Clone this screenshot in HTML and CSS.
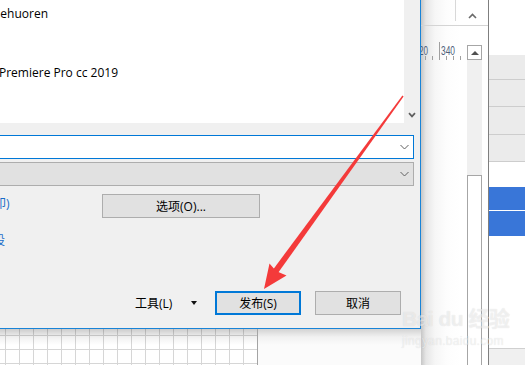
FILE: index.html
```html
<!DOCTYPE html>
<html>
<head>
<meta charset="utf-8">
<link rel="stylesheet" href="styles.css">
</head>
<body>
<div class="screen">
  <div class="left">
    <div class="dialog">
      <div class="listrow">
        <div class="list">
          <div class="item item1">nehuoren</div>
          <div class="item item2">Premiere Pro cc 2019</div>
        </div>
        <div class="vscroll">
          <svg width="8" height="6" viewBox="0 0 8 6"><path d="M1 1.2 L4 4.4 L7 1.2" fill="none" stroke="#5f5f5f" stroke-width="1.7"/></svg>
        </div>
      </div>
      <div class="combo active">
        <svg width="9" height="6" viewBox="0 0 9 6"><path d="M0.5 1 L4.5 5 L8.5 1" fill="none" stroke="#606060" stroke-width="1"/></svg>
      </div>
      <div class="combo">
        <svg width="9" height="6" viewBox="0 0 9 6"><path d="M0.5 1 L4.5 5 L8.5 1" fill="none" stroke="#606060" stroke-width="1"/></svg>
      </div>
      <div class="optrow">
        <span class="link link1">印)</span>
        <button class="btn opt">选项(O)...</button>
      </div>
      <div class="linkrow"><span class="link link2">设</span></div>
      <div class="footer">
        <span class="tools">工具(L)</span>
        <span class="caret"></span>
        <button class="btn primary">发布(S)</button>
        <button class="btn cancel">取消</button>
      </div>
    </div>
    <div class="below">
      <div class="grid"></div>
      <div class="pane"></div>
    </div>
  </div>
  <div class="right">
    <div class="colA">
      <div class="topbar">
        <div class="tb-cell"></div>
        <div class="tb-btn">
          <svg width="9" height="6" viewBox="0 0 9 6"><path d="M1 5 L4.5 1.5 L8 5" fill="none" stroke="#6a6a6a" stroke-width="1.6"/></svg>
        </div>
      </div>
      <div class="abody">
        <div class="ruler">
          <svg width="46" height="34" viewBox="0 0 46 34">
            <text x="-2" y="29" class="rtxt" textLength="9" lengthAdjust="spacingAndGlyphs">20</text>
            <text x="20" y="29" class="rtxt" textLength="14" lengthAdjust="spacingAndGlyphs">340</text>
            <g stroke="#a0a0a0" stroke-width="1">
              <line x1="4.5" y1="30" x2="4.5" y2="34"/>
              <line x1="11.5" y1="30" x2="11.5" y2="34"/>
              <line x1="18.5" y1="16" x2="18.5" y2="34"/>
              <line x1="25.5" y1="30" x2="25.5" y2="34"/>
              <line x1="32.5" y1="30" x2="32.5" y2="34"/>
              <line x1="39.5" y1="30" x2="39.5" y2="34"/>
            </g>
          </svg>
        </div>
        <div class="vsb">
          <div class="vsb-up"><span class="uptri"></span></div>
          <div class="vsb-track"></div>
          <div class="vsb-thumb"></div>
        </div>
      </div>
    </div>
    <div class="colB">
      <div class="r white top"></div>
      <div class="r gray h25"></div>
      <div class="r gray h27"></div>
      <div class="r gray h28"></div>
      <div class="r gray h27"></div>
      <div class="r white h25n"></div>
      <div class="r blue h23"></div>
      <div class="r sep"></div>
      <div class="r blue h25b"></div>
      <div class="r white fill"></div>
      <div class="r foot"></div>
    </div>
  </div>
  <svg class="arrow" width="525" height="365" viewBox="0 0 525 365">
    <polygon points="402.4,95.6 403.6,96.4 277.6,273.6 272.4,270.4" fill="#f43a3a"/>
    <polygon points="264,289 269.5,263.5 276,271 286.5,275.5" fill="#f43a3a"/>
  </svg>
  <div class="watermark">
    <div class="wm-main">Bai du 经验</div>
    <div class="wm-sub">jingyan.baidu.com</div>
  </div>
</div>
</body>
</html>
```

FILE: styles.css
```css
* { box-sizing: border-box; margin: 0; padding: 0; }
html, body { width: 525px; height: 365px; overflow: hidden; }
body {
  font-family: "Open Sans", "Noto Sans CJK SC", sans-serif;
  font-size: 12px;
  color: #000;
  background: #fff;
}
.screen { position: relative; display: flex; width: 525px; height: 365px; }

.left { width: 421px; display: flex; flex-direction: column; }
.dialog {
  height: 329px;
  background: #f0f0f0;
  border-right: 1px solid #1883d7;
  border-bottom: 1px solid #1883d7;
  display: flex;
  flex-direction: column;
}
.listrow { height: 123px; display: flex; flex-shrink: 0; }
.list { width: 404px; background: #fff; overflow: hidden; font-size: 12px; }
.item { line-height: 20px; white-space: nowrap; }
.item1 { margin-top: 4px; margin-left: -7px; }
.item2 { margin-top: 39px; margin-left: -1px; }
.vscroll {
  width: 16px;
  display: flex;
  align-items: flex-end;
  justify-content: center;
  padding-bottom: 5px;
  padding-right: 1px;
}
.vscroll svg { display: block; }

.combo {
  flex-shrink: 0;
  margin-top: 12px;
  height: 24px;
  width: 414px;
  border: 1px solid #adadad;
  border-left: 0;
  background: #e1e1e1;
  display: flex;
  justify-content: flex-end;
  align-items: center;
  padding-right: 4px;
}
.combo + .combo { margin-top: 3px; }
.combo.active { border-color: #0078d7; background: #fff; }
.combo svg { display: block; }

.optrow {
  flex-shrink: 0;
  margin-top: 8px;
  display: grid;
  grid-template-columns: 102px 158px;
  align-items: start;
  height: 24px;
}
.link { color: #1a6cc8; white-space: nowrap; line-height: 17px; }
.link1 { margin-left: -6px; margin-top: 1px; }
.linkrow { flex-shrink: 0; margin-top: 14px; height: 17px; }
.link2 { display: inline-block; margin-left: -7px; }

.btn {
  font-family: "Open Sans", "Noto Sans CJK SC", sans-serif;
  font-size: 12px;
  color: #000;
  background: #e1e1e1;
  border: 1px solid #adadad;
  height: 24px;
  display: flex;
  align-items: center;
  justify-content: center;
}
.opt { width: 158px; }

.footer {
  flex-shrink: 0;
  margin-top: 42px;
  height: 24px;
  display: flex;
  align-items: center;
  padding-left: 135px;
}
.tools { width: 56px; }
.caret {
  width: 0; height: 0;
  border-left: 3.5px solid transparent;
  border-right: 3.5px solid transparent;
  border-top: 4px solid #111;
  margin-right: 18px;
}
.primary { width: 86px; border: 2px solid #0078d7; }
.cancel { width: 86px; margin-left: 14px; }

.below { height: 36px; display: flex; }
.grid {
  width: 258px;
  border-right: 1px solid #a4a4a4;
  background-color: #fff;
  background-image:
    linear-gradient(rgba(0,0,0,0.2), rgba(0,0,0,0.06) 8px, rgba(0,0,0,0) 16px),
    linear-gradient(#d6d6d6 1px, transparent 1px),
    linear-gradient(90deg, #d6d6d6 1px, transparent 1px);
  background-size: 100% 100%, 14px 14px, 14px 14px;
  background-repeat: no-repeat, repeat, repeat;
  background-position: 0 0, 5px 6px, 5px 6px;
}
.pane {
  flex: 1;
  background: linear-gradient(rgba(0,0,0,0.16), rgba(0,0,0,0.04) 8px, rgba(0,0,0,0) 16px), #fbfbfb;
}

.right { width: 104px; display: flex; }
.colA {
  width: 67px;
  display: flex;
  flex-direction: column;
  background: linear-gradient(90deg, #c6c6c6 0, #e6e6e6 5px, #f6f6f6 14px, #fdfdfd 26px, #fff 40px);
}
.topbar { height: 26px; border-bottom: 1px solid #d4d4d4; display: flex; flex-shrink: 0; }
.tb-cell { width: 35px; height: 21px; border-right: 1px solid #d8d8d8; }
.tb-btn { flex: 1; display: flex; justify-content: center; padding-top: 13px; }
.tb-btn svg { display: block; }
.abody { flex: 1; display: flex; padding-right: 6px; }
.ruler { width: 46px; }
.ruler svg { display: block; }
.rtxt { font-family: "Liberation Sans", sans-serif; font-size: 12px; fill: #4f5f7a; }
.vsb { width: 15px; margin-top: 19px; display: flex; flex-direction: column; }
.vsb-up {
  height: 15px;
  border: 1px solid #a6a6a6;
  background: #fff;
  display: flex;
  align-items: center;
  justify-content: center;
}
.uptri {
  width: 0; height: 0;
  border-left: 4px solid transparent;
  border-right: 4px solid transparent;
  border-bottom: 4px solid #505050;
}
.vsb-track { height: 115px; background: #f0f0f0; }
.vsb-thumb { flex: 1; border: 1px solid #a6a6a6; border-bottom: 0; background: #fff; }

.colB { flex: 1; border-left: 1px solid #7f7f7f; display: flex; flex-direction: column; }
.r { flex-shrink: 0; }
.white { background: #fff; }
.top { height: 55px; }
.gray { background: #ebebeb; border-bottom: 1px solid #cdcdcd; }
.h25 { height: 25px; }
.h27 { height: 27px; }
.h28 { height: 28px; }
.h25n { height: 25px; }
.blue { background: #3976d8; }
.h23 { height: 23px; }
.sep { height: 1px; background: #fff; }
.h25b { height: 25px; }
.fill { flex: 1; }
.foot { height: 17px; background: #f0f0f0; border-top: 1px solid #d0d0d0; }

.arrow { position: absolute; left: 0; top: 0; pointer-events: none; }

.watermark {
  position: absolute;
  left: 402px;
  top: 306px;
  color: rgba(255,255,255,0.55);
  text-shadow: 0 0 1px rgba(0,0,0,0.14);
  pointer-events: none;
  font-family: "Liberation Sans", "Noto Sans CJK SC", sans-serif;
}
.wm-main { font-size: 21px; font-weight: bold; line-height: 26px; white-space: nowrap; letter-spacing: -0.5px; }
.wm-sub { font-size: 12px; line-height: 14px; margin-top: 2px; letter-spacing: 0.3px; }
```
